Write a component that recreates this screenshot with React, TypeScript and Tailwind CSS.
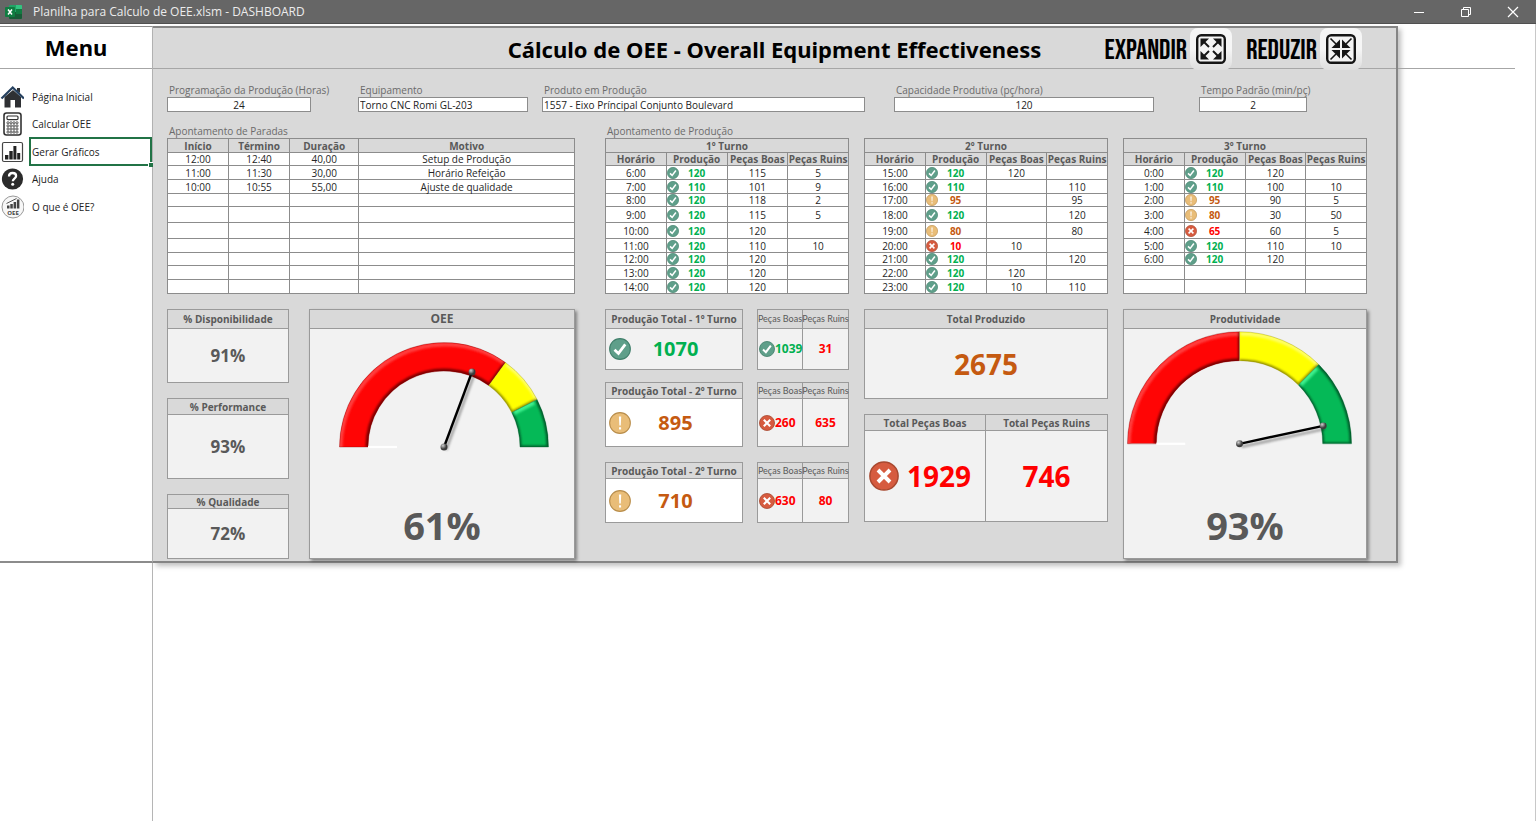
import React, { useState } from 'react';

type Status = 'ok' | 'warn' | 'bad';

interface ProductionRow {
  time: string;
  status?: Status;
  total: string;
  good: string;
  bad: string;
}

interface GaugeSegment {
  from: number;
  to: number;
  color: string;
  dark: string;
  light: string;
}

const FIELDS = [
  { id: 'horas', label: 'Programação da Produção (Horas)', value: '24', track: 'pr-[47px]', align: 'text-center' },
  { id: 'equip', label: 'Equipamento', value: 'Torno CNC Romi GL-203', track: 'pr-[14px]', align: 'text-left' },
  { id: 'produto', label: 'Produto em Produção', value: '1557 - Eixo Príncipal Conjunto Boulevard', track: 'pr-[29px]', align: 'text-left' },
  { id: 'capacidade', label: 'Capacidade Produtiva (pç/hora)', value: '120', track: 'pr-[45px]', align: 'text-center' },
  { id: 'tempo', label: 'Tempo Padrão (min/pç)', value: '2', track: 'pr-[60px]', align: 'text-center' },
];

// Row heights shared by the stops table and the three shift tables
const ROW_HEIGHTS = [
  'h-[14px]', 'h-[13px]', 'h-[14px]', 'h-[14px]', 'h-[13px]', 'h-[16px]',
  'h-[16px]', 'h-[14px]', 'h-[13px]', 'h-[14px]', 'h-[14px]',
];

const STOPS = [
  ['12:00', '12:40', '40,00', 'Setup de Produção'],
  ['11:00', '11:30', '30,00', 'Horário Refeição'],
  ['10:00', '10:55', '55,00', 'Ajuste de qualidade'],
  ...Array.from({ length: 7 }, () => ['', '', '', '']),
];

const row = (time: string, total: string, good: string, bad: string, status?: Status): ProductionRow => ({
  time, total, good, bad, status,
});

const SHIFTS: { title: string; rows: ProductionRow[] }[] = [
  {
    title: '1º Turno',
    rows: [
      row('6:00', '120', '115', '5', 'ok'),
      row('7:00', '110', '101', '9', 'ok'),
      row('8:00', '120', '118', '2', 'ok'),
      row('9:00', '120', '115', '5', 'ok'),
      row('10:00', '120', '120', '', 'ok'),
      row('11:00', '120', '110', '10', 'ok'),
      row('12:00', '120', '120', '', 'ok'),
      row('13:00', '120', '120', '', 'ok'),
      row('14:00', '120', '120', '', 'ok'),
    ],
  },
  {
    title: '2º Turno',
    rows: [
      row('15:00', '120', '120', '', 'ok'),
      row('16:00', '110', '', '110', 'ok'),
      row('17:00', '95', '', '95', 'warn'),
      row('18:00', '120', '', '120', 'ok'),
      row('19:00', '80', '', '80', 'warn'),
      row('20:00', '10', '10', '', 'bad'),
      row('21:00', '120', '', '120', 'ok'),
      row('22:00', '120', '120', '', 'ok'),
      row('23:00', '120', '10', '110', 'ok'),
    ],
  },
  {
    title: '3º Turno',
    rows: [
      row('0:00', '120', '120', '', 'ok'),
      row('1:00', '110', '100', '10', 'ok'),
      row('2:00', '95', '90', '5', 'warn'),
      row('3:00', '80', '30', '50', 'warn'),
      row('4:00', '65', '60', '5', 'bad'),
      row('5:00', '120', '110', '10', 'ok'),
      row('6:00', '120', '120', '', 'ok'),
      row('', '', '', ''),
      row('', '', '', ''),
    ],
  },
];

const STATUS_TEXT: Record<Status, string> = {
  ok: 'text-[#00b050]',
  warn: 'text-[#c55a11]',
  bad: 'text-[#ff0000]',
};

const StatusIcon: React.FC<{ status: Status; className: string }> = ({ status, className }) => {
  const fill = { ok: '#5f9f8a', warn: '#e9bd78', bad: '#d65b3f' }[status];
  const edge = { ok: '#3f7f6a', warn: '#b98d4a', bad: '#a8482f' }[status];
  return (
    <svg viewBox="0 0 20 20" className={`shrink-0 ${className}`} aria-hidden="true">
      <circle cx="10" cy="10" r="9.4" fill={fill} stroke={edge} strokeWidth="1" />
      {status === 'ok' && <path d="M5 10.6 8.6 14 14.8 5.8" fill="none" stroke="#fff" strokeWidth="2.5" />}
      {status === 'warn' && <path d="M9 4h2.1l-.4 8.2H9.4ZM9.1 13.8h1.9v2H9.1Z" fill="#fff" />}
      {status === 'bad' && <path d="m6 6 8 8m0-8-8 8" fill="none" stroke="#fff" strokeWidth="2.6" />}
    </svg>
  );
};

const ExcelIcon = () => (
  <svg viewBox="0 0 18 16" className="h-4 w-[18px]" aria-hidden="true">
    <rect x="4" y="1" width="13" height="14" rx="1" fill="#21a366" />
    <path d="M11 1h5a1 1 0 0 1 1 1v3h-6Z" fill="#33c481" />
    <path d="M4 8h13v6a1 1 0 0 1-1 1H5a1 1 0 0 1-1-1Z" fill="#185c37" />
    <path d="M11 5h6v5h-6Z" fill="#107c41" />
    <rect x="0" y="3" width="10" height="10" rx="1" fill="#107c41" />
    <path d="m3 5.5 4 5m0-5-4 5" stroke="#fff" strokeWidth="1.5" />
  </svg>
);

const HomeIcon = () => (
  <svg viewBox="0 0 24 24" className="size-6" aria-hidden="true">
    <path d="M4.5 12v10.5h6V15H15v7.5h6V12l-8-7Z" fill="#2e3033" />
    <path d="M17 3h3v5l-3-2Z" fill="#2e3033" />
    <path d="m1.500 13.500 11.200-11 11.200 11" fill="none" stroke="#25405f" strokeWidth="2.2" />
  </svg>
);

const CalcIcon = () => (
  <svg viewBox="0 0 24 24" className="size-6" aria-hidden="true">
    <rect x="4" y="1" width="17" height="22" rx="2.5" fill="#fff" stroke="#333" strokeWidth="1.6" />
    <rect x="7" y="4" width="11" height="3.6" rx="1" fill="#fff" stroke="#333" strokeWidth="1.2" />
    {[10.8, 13.9, 17, 20.1].map((y) =>
      [8, 11, 14, 17].map((x) => <circle key={`${x}-${y}`} cx={x} cy={y} r="1.1" fill="#fff" stroke="#333" strokeWidth="0.8" />),
    )}
  </svg>
);

const ChartIcon = () => (
  <svg viewBox="0 0 24 24" className="size-6" aria-hidden="true">
    <rect x="2.5" y="2.5" width="20" height="19" rx="1.5" fill="#fff" stroke="#444" strokeWidth="1.2" />
    <path d="M5 15h3.4v4.5H5ZM9.3 11h3.4v8.5H9.3ZM13.4 6h3v13.5h-3ZM17.2 13h3v6.5h-3Z" fill="#222" />
  </svg>
);

const HelpIcon = () => (
  <svg viewBox="0 0 24 24" className="size-6" aria-hidden="true">
    <circle cx="12.5" cy="12" r="10.6" fill="#2b2b2b" />
    <path d="M9 9.5c0-2.3 1.5-3.5 3.6-3.5s3.5 1.2 3.5 3c0 2.6-3.3 2.7-3.3 5.2" fill="none" stroke="#fff" strokeWidth="2.3" />
    <circle cx="12.7" cy="17.3" r="1.5" fill="#fff" />
  </svg>
);

const OeeIcon = () => (
  <svg viewBox="0 0 24 24" className="size-6" aria-hidden="true">
    <circle cx="13" cy="12" r="11" fill="#f7f7f7" stroke="#999" strokeWidth="1" />
    <path d="M7 10.5h2.5v3H7ZM10.3 9h2.5v4.5h-2.5ZM13.6 7h2.5v6.5h-2.5ZM16.9 4.5h2.5v9h-2.500Z" fill="#444" />
    <path d="m6.5 8.500 10-5" stroke="#555" strokeWidth="1" />
    <text x="13" y="20" textAnchor="middle" fontSize="6" fontWeight="700" fontFamily="Open Sans, sans-serif" fill="#444">OEE</text>
  </svg>
);

const MENU = [
  { label: 'Página Inicial', icon: <HomeIcon /> },
  { label: 'Calcular OEE', icon: <CalcIcon /> },
  { label: 'Gerar Gráficos', icon: <ChartIcon /> },
  { label: 'Ajuda', icon: <HelpIcon /> },
  { label: 'O que é OEE?', icon: <OeeIcon /> },
];

const ResizeButton: React.FC<{ label: string; inward?: boolean }> = ({ label, inward }) => (
  <button className="flex items-center gap-[3px] font-['Bebas_Neue','Roboto_Condensed','Liberation_Sans_Narrow','Roboto',sans-serif] text-[28px] leading-6 font-normal text-black">
    <span className="pt-1">{label}</span>
    <span className="flex h-[42px] w-[42px] items-center justify-center rounded-lg bg-linear-to-b from-[#f6f6f6] from-50% to-[#dedede] to-100%">
      <svg viewBox="0 0 30 30" className="size-[30px]" aria-hidden="true">
        <rect x="1.2" y="1.2" width="27.6" height="27.6" rx="4" fill="#f4f4f4" stroke="#161616" strokeWidth="2.4" />
        {[0, 90, 180, 270].map((angle) => (
          <g key={angle} transform={`rotate(${angle} 15 15)`}>
            {inward ? (
              <>
                <path d="M4.500 4.500 10 10" stroke="#161616" strokeWidth="1.6" />
                <path d="M14 14H5.500l3-3L11 8.500l3-3Z" fill="#161616" />
              </>
            ) : (
              <>
                <path d="m13 13-5-5" stroke="#161616" strokeWidth="2" />
                <path d="M4.500 4.500h8.500L4.500 13Z" fill="#161616" />
              </>
            )}
          </g>
        ))}
      </svg>
    </span>
  </button>
);

const Field: React.FC<(typeof FIELDS)[number]> = ({ id, label, value, track, align }) => {
  const [text, setText] = useState(value);
  return (
    <div className={`min-w-0 ${track}`}>
      <label htmlFor={id} className="block pl-[2px] text-[10px] leading-[14px] whitespace-nowrap text-[#6b6b6b]">
        {label}
      </label>
      <input
        id={id}
        value={text}
        onChange={(e) => setText(e.target.value)}
        className={`block h-[15px] w-full border border-[#8c8c8c] bg-white px-px text-[10px] leading-3 text-[#222] ${align}`}
      />
    </div>
  );
};

const StopsTable = () => (
  <table className="w-full table-fixed border-collapse text-center text-[10px] leading-3 text-[#262626]">
    <thead>
      <tr className={`${ROW_HEIGHTS[0]} text-[#595959]`}>
        <th className="w-[15%] border border-[#8c8c8c] p-0">Início</th>
        <th className="w-[15%] border border-[#8c8c8c] p-0">Término</th>
        <th className="w-[17%] border border-[#8c8c8c] p-0">Duração</th>
        <th className="border border-[#8c8c8c] p-0">Motivo</th>
      </tr>
    </thead>
    <tbody className="bg-white">
      {STOPS.map((cells, i) => (
        <tr key={i} className={ROW_HEIGHTS[i + 1]}>
          {cells.map((cell, j) => (
            <td key={j} className="border border-[#8c8c8c] p-0">{cell}</td>
          ))}
        </tr>
      ))}
    </tbody>
  </table>
);

const ShiftTable: React.FC<{ title: string; rows: ProductionRow[] }> = ({ title, rows }) => (
  <table className="w-full table-fixed border-collapse text-center text-[10px] leading-3 text-[#262626]">
    <thead className="text-[#595959]">
      <tr className={ROW_HEIGHTS[0]}>
        <th colSpan={4} className="border border-[#8c8c8c] p-0">{title}</th>
      </tr>
      <tr className={`${ROW_HEIGHTS[1]} whitespace-nowrap`}>
        <th className="border border-[#8c8c8c] p-0">Horário</th>
        <th className="border border-[#8c8c8c] p-0">Produção</th>
        <th className="border border-[#8c8c8c] p-0">Peças Boas</th>
        <th className="border border-[#8c8c8c] p-0">Peças Ruins</th>
      </tr>
    </thead>
    <tbody className="bg-white">
      {rows.map((r, i) => (
        <tr key={i} className={ROW_HEIGHTS[i + 2]}>
          <td className="border border-[#8c8c8c] p-0">{r.time}</td>
          <td className="border border-[#8c8c8c] p-0">
            {r.status && (
              <div className="grid items-center">
                <StatusIcon status={r.status} className="col-start-1 row-start-1 size-3" />
                <span className={`col-start-1 row-start-1 font-bold ${STATUS_TEXT[r.status]}`}>{r.total}</span>
              </div>
            )}
          </td>
          <td className="border border-[#8c8c8c] p-0">{r.good}</td>
          <td className="border border-[#8c8c8c] p-0">{r.bad}</td>
        </tr>
      ))}
    </tbody>
  </table>
);

interface CardProps {
  title: string;
  height: string;
  head?: string;
  body?: string;
  children: React.ReactNode;
}

const Card: React.FC<CardProps> = ({ title, height, head = 'h-[19px] text-[10px]', body = 'bg-[#f2f2f2]', children }) => (
  <section className={`flex min-w-0 flex-col border border-[#9a9a9a] ${height}`}>
    <h3 className={`flex shrink-0 items-center justify-center border-b border-[#9a9a9a] leading-3 font-bold whitespace-nowrap text-[#595959] ${head}`}>
      {title}
    </h3>
    <div className={`flex-1 ${body}`}>{children}</div>
  </section>
);

const Percent: React.FC<{ value: string }> = ({ value }) => (
  <p className="flex h-full items-center justify-center text-[17px] font-bold text-[#595959]">{value}</p>
);

interface ShiftTotalProps {
  title: string;
  status: Status;
  total: string;
  goodStatus: Status;
  good: string;
  bad: string;
  height: string;
  head: string;
}

const ShiftTotal: React.FC<ShiftTotalProps> = ({ title, status, total, goodStatus, good, bad, height, head }) => (
  <div className="grid grid-cols-[138fr_92fr] gap-[14px]">
    <Card title={title} height={height} head={`${head} text-[10px]`} body={status === 'ok' ? 'bg-[#f2f2f2]' : 'bg-white'}>
      <div className="grid h-full items-center pl-[3px]">
        <StatusIcon status={status} className="col-start-1 row-start-1 size-[22px]" />
        <span className={`col-start-1 row-start-1 text-center text-xl font-bold ${STATUS_TEXT[status]}`}>{total}</span>
      </div>
    </Card>
    <div className={`grid grid-cols-2 divide-x divide-[#9a9a9a] border border-[#9a9a9a] text-xs font-bold ${height}`}>
      <div className="flex min-w-0 flex-col">
        <h4 className={`flex shrink-0 items-center justify-center border-b border-[#9a9a9a] font-['Lato',sans-serif] text-[9px] leading-3 font-normal whitespace-nowrap text-[#595959] ${head}`}>
          Peças Boas
        </h4>
        <div className={`flex flex-1 items-center bg-[#f2f2f2] pl-px ${STATUS_TEXT[goodStatus]}`}>
          <StatusIcon status={goodStatus} className="size-4" />
          {good}
        </div>
      </div>
      <div className="flex min-w-0 flex-col">
        <h4 className={`flex shrink-0 items-center justify-center border-b border-[#9a9a9a] font-['Lato',sans-serif] text-[9px] leading-3 font-normal whitespace-nowrap text-[#595959] ${head}`}>
          Peças Ruins
        </h4>
        <div className="flex flex-1 items-center justify-center bg-[#f2f2f2] text-[#ff0000]">{bad}</div>
      </div>
    </div>
  </div>
);

const point = (cx: number, cy: number, r: number, share: number) => {
  const a = Math.PI * (1 - share);
  return `${(cx + r * Math.cos(a)).toFixed(2)} ${(cy - r * Math.sin(a)).toFixed(2)}`;
};

interface GaugeProps {
  id: string;
  width: number;
  cx: number;
  cy: number;
  outer: number;
  inner: number;
  tip: [number, number];
  stops: [number, number];
}

const Gauge: React.FC<GaugeProps> = ({ id, width, cx, cy, outer, inner, tip, stops }) => {
  const segments: GaugeSegment[] = [
    { from: 0, to: stops[0], color: '#ff0505', dark: '#7a0000', light: '#ff4040' },
    { from: stops[0], to: stops[1], color: '#ffff00', dark: '#8f8a00', light: '#ffff66' },
    { from: stops[1], to: 1, color: '#05b957', dark: '#045c2c', light: '#3df08e' },
  ];
  return (
    <svg viewBox={`0 0 ${width} 130`} className="h-[130px] w-full" aria-hidden="true">
      <defs>
        <filter id={`${id}-soft`} x="-20%" y="-20%" width="140%" height="140%">
          <feGaussianBlur stdDeviation="1.3" />
        </filter>
        <radialGradient id={`${id}-knob`} cx="0.35" cy="0.3">
          <stop offset="0" stopColor="#d0d0d0" />
          <stop offset="1" stopColor="#3c3c3c" />
        </radialGradient>
      </defs>
      {segments.map((s, i) => {
        const outerArc = `M${point(cx, cy, outer, s.from)}A${outer} ${outer} 0 0 1 ${point(cx, cy, outer, s.to)}`;
        const innerArc = `M${point(cx, cy, inner, s.from)}A${inner} ${inner} 0 0 1 ${point(cx, cy, inner, s.to)}`;
        const d = `${outerArc}L${point(cx, cy, inner, s.to)}A${inner} ${inner} 0 0 0 ${point(cx, cy, inner, s.from)}Z`;
        return (
          <g key={s.color}>
            <clipPath id={`${id}-clip-${i}`}>
              <path d={d} />
            </clipPath>
            <g clipPath={`url(#${id}-clip-${i})`}>
              <path d={d} fill={s.color} />
              <g filter={`url(#${id}-soft)`} fill="none">
                <path d={outerArc} stroke={i === 2 ? s.dark : s.light} strokeWidth="4" transform={i === 2 ? '' : 'translate(1 2)'} />
                <path d={innerArc} stroke={s.dark} strokeWidth={i === 0 ? 5 : 3} />
                <path d={`M${point(cx, cy, outer, s.to)}L${point(cx, cy, inner, s.to)}`} stroke={s.dark} strokeWidth="3" />
                {i === 2 && <path d={`M${point(cx, cy, outer - 4, s.from)}L${point(cx, cy, inner + 2, s.from)}`} stroke={s.light} strokeWidth="7" />}
              </g>
            </g>
            <path d={d} fill="none" stroke={s.dark} strokeOpacity="0.5" strokeWidth="0.7" />
          </g>
        );
      })}
      <path d={`M${cx - inner} ${cy}h29`} stroke="#fff" strokeWidth="2.2" />
      <path d={`M${cx + 2} ${cy + 3}L${tip[0] + 2} ${tip[1] + 3}`} stroke="#000" strokeOpacity="0.3" strokeWidth="3" filter={`url(#${id}-soft)`} />
      <path d={`M${cx} ${cy}L${tip[0]} ${tip[1]}`} stroke="#000" strokeWidth="2.4" />
      <circle cx={cx} cy={cy} r="3.5" fill={`url(#${id}-knob)`} />
      <circle cx={tip[0]} cy={tip[1]} r="3.5" fill={`url(#${id}-knob)`} />
    </svg>
  );
};

const TitleBar = () => (
  <header className="flex h-6 items-center border-b border-[#505050] bg-[#666] pl-[5px] text-xs text-[#ececec]">
    <ExcelIcon />
    <h1 className="ml-[10px] flex-1">Planilha para Calculo de OEE.xlsm - DASHBOARD</h1>
    <button aria-label="Minimizar" className="flex w-[47px] justify-center">
      <svg viewBox="0 0 12 12" className="size-3"><path d="M1 6.5h10" stroke="#fff" /></svg>
    </button>
    <button aria-label="Restaurar" className="flex w-[47px] justify-center">
      <svg viewBox="0 0 12 12" className="size-3" fill="none" stroke="#fff"><path d="M1.5 3.5h7v7h-7ZM3.5 3.5v-2h7v7h-2" /></svg>
    </button>
    <button aria-label="Fechar" className="flex w-[47px] justify-center">
      <svg viewBox="0 0 12 12" className="size-3" fill="none" stroke="#fff" strokeWidth="1.2"><path d="m1 1 10 10m0-10L1 11" /></svg>
    </button>
  </header>
);

const Sidebar = () => {
  const [active, setActive] = useState('Gerar Gráficos');
  return (
    <aside className="mt-[2px] border-t border-r border-b-2 border-t-[#8c8c8c] border-r-[#b5b5b5] border-b-[#8c8c8c]">
      <h2 className="flex h-[42px] items-center justify-center border-b border-[#a6a6a6] font-['Noto_Sans','Open_Sans',sans-serif] text-[22px] font-bold text-black">Menu</h2>
      <nav className="mt-[13px] flex flex-col text-[10px] leading-4 text-[#222]">
        {MENU.map(({ label, icon }) => (
          <a
            key={label}
            href="#"
            onClick={() => setActive(label)}
            className="grid h-[27px] grid-cols-[29px_1fr] items-center even:h-[28px]"
          >
            {icon}
            <span className={`relative flex h-[29px] items-center border-2 pl-px ${active === label ? 'border-[#217346]' : 'border-transparent'}`}>
              {label}
              {active === label && <span className="absolute -right-[3px] -bottom-[3px] size-[5px] border-t border-l border-white bg-[#217346]" />}
            </span>
          </a>
        ))}
      </nav>
    </aside>
  );
};

export default function App() {
  return (
    <div className="flex min-h-screen flex-col bg-white font-['Open_Sans',sans-serif]">
      <TitleBar />
      <div className="grid flex-1 grid-cols-[153px_minmax(0,1fr)_138px] grid-rows-[auto_1fr]">
        <Sidebar />

        <main className="mt-[2px] border-t-2 border-r-2 border-b-2 border-[#858585] bg-[#d9d9d9] shadow-[3px_3px_5px_rgba(0,0,0,0.25)]">
          <div className="grid h-[41px] grid-cols-[1fr_auto_1fr] items-center border-b border-[#a6a6a6]">
            <h2 className="col-start-2 font-['Noto_Sans','Open_Sans',sans-serif] text-[22px] font-bold text-black">
              Cálculo de OEE - Overall Equipment Effectiveness
            </h2>
            <div className="flex items-center justify-end gap-[14px] pr-[34px]">
              <ResizeButton label="EXPANDIR" />
              <ResizeButton label="REDUZIR" inward />
            </div>
          </div>

          <div className="pt-[14px] pr-[29px] pb-[2px] pl-[14px]">
            <div className="grid grid-cols-[191fr_184fr_352fr_305fr_168fr]">
              {FIELDS.map((f) => (
                <Field key={f.id} {...f} />
              ))}
            </div>

            <div className="mt-3 grid grid-cols-[408fr_762fr] gap-[30px]">
              <div>
                <h3 className="pl-[2px] text-[10px] leading-[14px] text-[#6b6b6b]">Apontamento de Paradas</h3>
                <StopsTable />
              </div>
              <div>
                <h3 className="pl-[2px] text-[10px] leading-[14px] text-[#6b6b6b]">Apontamento de Produção</h3>
                <div className="grid grid-cols-3 gap-[15px]">
                  {SHIFTS.map((shift) => (
                    <ShiftTable key={shift.title} {...shift} />
                  ))}
                </div>
              </div>
            </div>

            <div className="mt-[15px] grid grid-cols-[408fr_762fr] items-start gap-[30px]">
              <div className="grid grid-cols-[122fr_266fr] gap-5">
                <div className="flex flex-col gap-[15px]">
                  <Card title="% Disponibilidade" height="h-[74px]"><Percent value="91%" /></Card>
                  <Card title="% Performance" height="h-[81px]" head="h-4 text-[10px]"><Percent value="93%" /></Card>
                  <Card title="% Qualidade" height="h-[65px]" head="h-[14px] text-[10px]"><Percent value="72%" /></Card>
                </div>
                <Card title="OEE" height="h-[250px] shadow-[2px_2px_3px_rgba(0,0,0,0.4)]" head="h-[19px] text-xs">
                  <Gauge id="oee" width={264} cx={134} cy={118} outer={104.5} inner={76} tip={[162, 43]} stops={[0.7, 0.85]} />
                  <p className="mt-10 text-center text-[38px] leading-[52px] font-bold text-[#595959]">61%</p>
                </Card>
              </div>

              <div className="grid grid-cols-3 items-start gap-[15px]">
                <div className="flex flex-col">
                  <ShiftTotal title="Produção Total - 1º Turno" status="ok" total="1070" goodStatus="ok" good="1039" bad="31" height="h-[61px]" head="h-[19px]" />
                  <div className="mt-3">
                    <ShiftTotal title="Produção Total - 2º Turno" status="warn" total="895" goodStatus="bad" good="260" bad="635" height="h-[65px]" head="h-4" />
                  </div>
                  <div className="mt-[15px]">
                    <ShiftTotal title="Produção Total - 2º Turno" status="warn" total="710" goodStatus="bad" good="630" bad="80" height="h-[61px]" head="h-4" />
                  </div>
                </div>

                <div className="flex flex-col gap-[15px]">
                  <Card title="Total Produzido" height="h-[90px]">
                    <p className="flex h-full items-center justify-center text-[28px] font-bold text-[#c55a11]">2675</p>
                  </Card>
                  <div className="grid grid-cols-2">
                    <Card title="Total Peças Boas" height="h-[108px]" head="h-4 text-[10px]">
                      <div className="flex h-full items-center gap-2 pl-1 text-[28px] font-bold text-[#ff0000]">
                        <StatusIcon status="bad" className="size-[30px]" />
                        1929
                      </div>
                    </Card>
                    <Card title="Total Peças Ruins" height="h-[108px] border-l-0" head="h-4 text-[10px]">
                      <p className="flex h-full items-center justify-center text-[28px] font-bold text-[#ff0000]">746</p>
                    </Card>
                  </div>
                </div>

                <Card title="Produtividade" height="h-[250px] shadow-[2px_2px_3px_rgba(0,0,0,0.4)]">
                  <Gauge id="prod" width={243} cx={116} cy={115} outer={112.5} inner={83.5} tip={[200, 97]} stops={[0.5, 0.75]} />
                  <p className="mt-10 text-center text-[38px] leading-[52px] font-bold text-[#595959]">93%</p>
                </Card>
              </div>
            </div>
          </div>
        </main>

        <div className="border-r border-[#c8c8c8]">
          <div className="mr-5 h-[45px] border-b border-[#a6a6a6]" />
        </div>
        <div className="border-r border-[#b5b5b5]" />
        <div className="col-span-2 border-r border-[#c8c8c8]" />
      </div>
    </div>
  );
}
